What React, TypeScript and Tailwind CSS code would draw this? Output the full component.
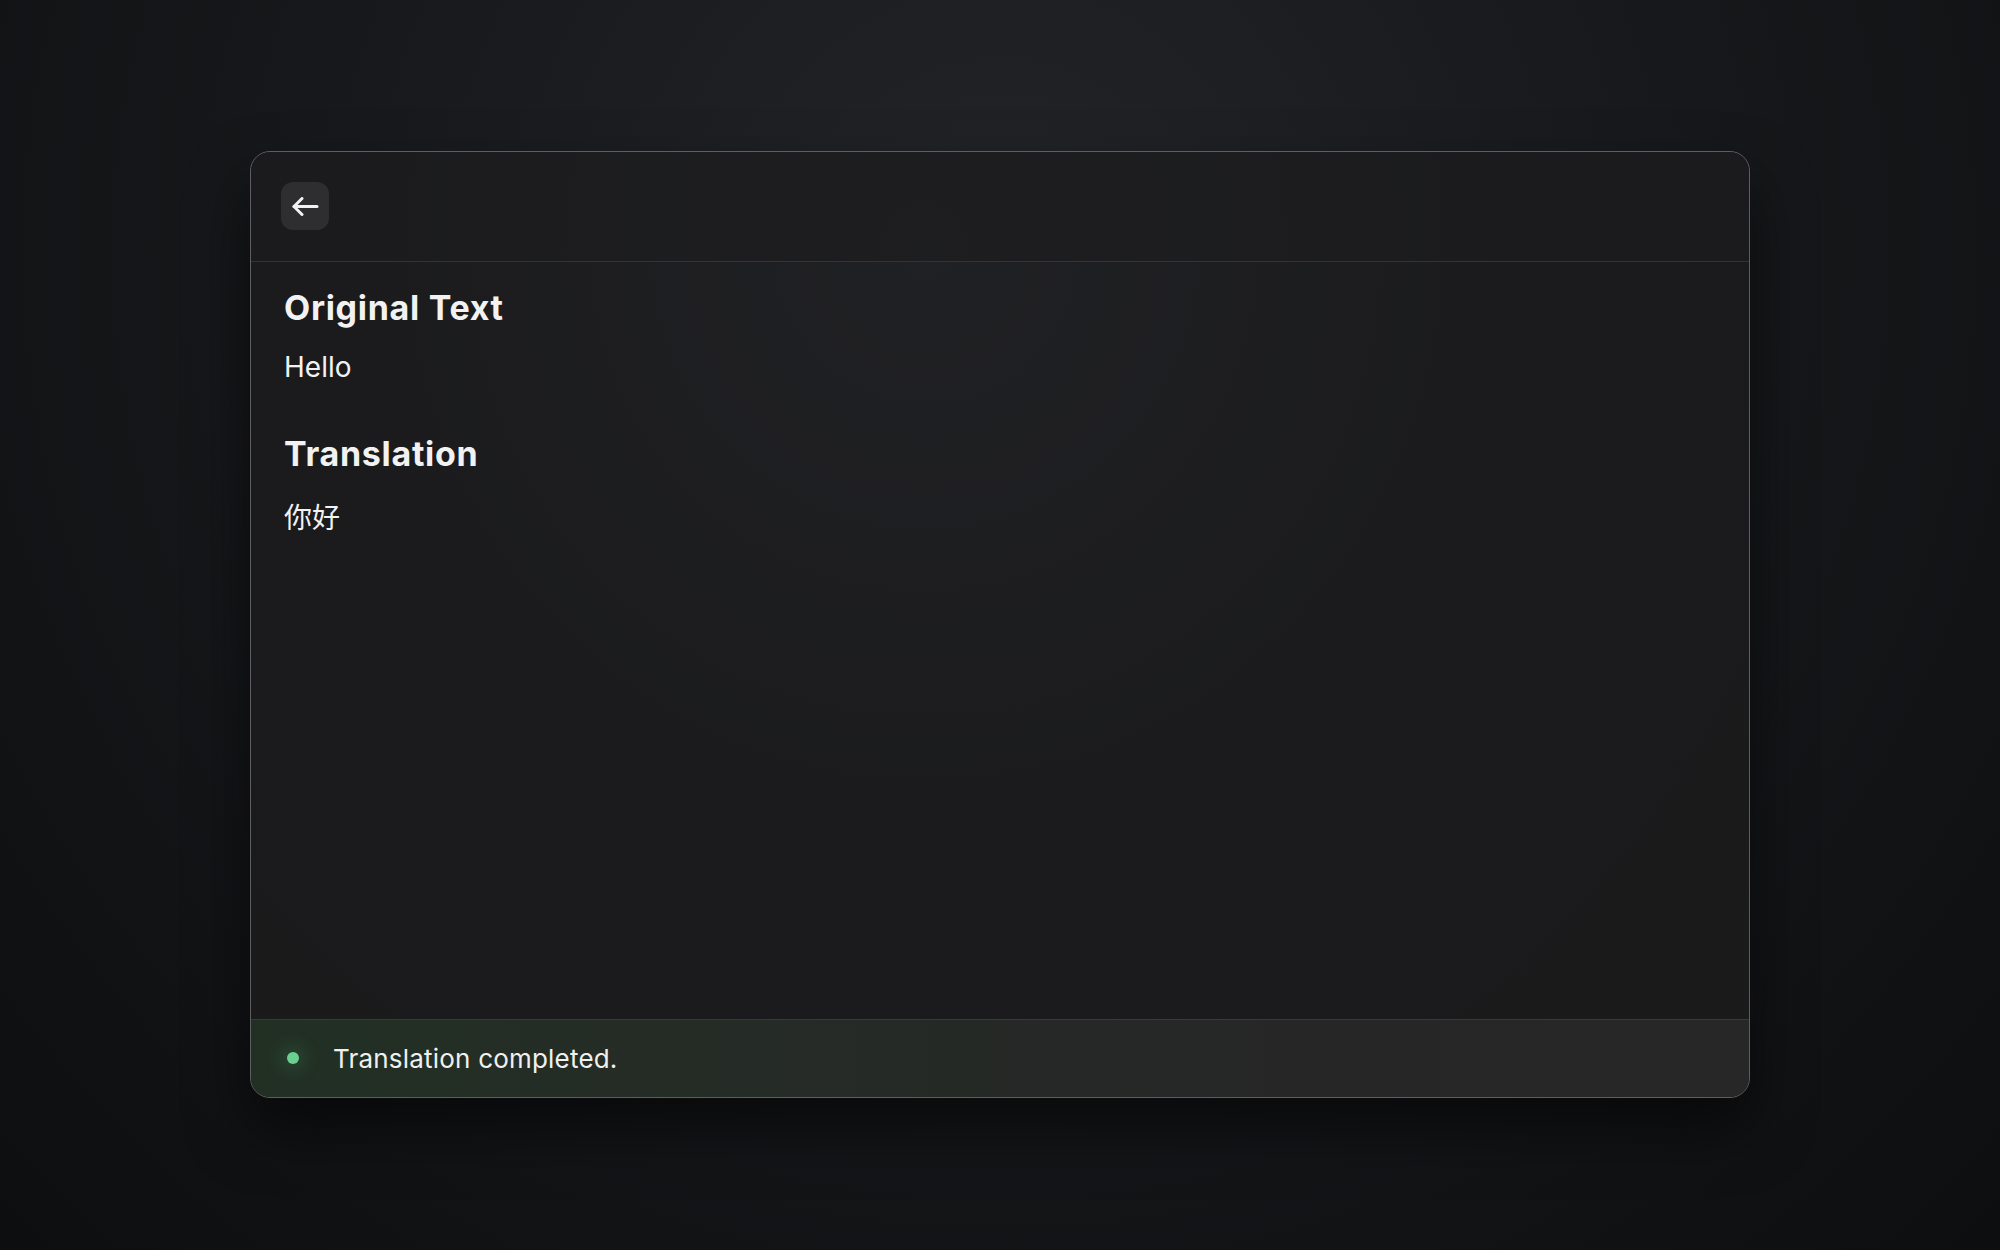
export default function App() {
  return (
    <div
      className="w-full h-screen flex items-center justify-center bg-[radial-gradient(ellipse_at_50%_20%,#232428_0%,#18191c_45%,#0d0e0f_100%)]"
      style={{ fontFamily: 'Inter, "Noto Sans CJK SC", sans-serif' }}
    >
      <div className="w-[1500px] h-[947px] -mt-[2px] flex flex-col rounded-[20px] border border-[#5e5e60] overflow-hidden bg-[radial-gradient(ellipse_at_45%_10%,#202124_0%,#1b1b1d_50%,#1a1a1b_100%)] shadow-[0_30px_60px_rgba(0,0,0,0.55)]">
        <header className="h-[110px] shrink-0 px-[30px] flex items-center border-b border-[#333335] bg-[#1c1c1e]/60">
          <button className="w-12 h-12 rounded-xl bg-[#2e2e30] flex items-center justify-center text-[#f2f2f2]">
            <svg width="27" height="19" viewBox="0 0 27 19" fill="none" stroke="currentColor" strokeWidth="3" strokeLinecap="round" strokeLinejoin="round">
              <path d="M2 9.5h23" />
              <path d="M10 1.5 2 9.5l8 8" />
            </svg>
          </button>
        </header>

        <main className="flex-1 px-[33px] pt-[26px] text-[#f2f2f2]">
          <h2 className="text-[34px] leading-[40px] font-bold tracking-[0.7px]">Original Text</h2>
          <p className="mt-[22px] text-[28px] leading-[34px]">Hello</p>
          <h2 className="mt-[50px] text-[34px] leading-[40px] font-bold tracking-[0.7px]">Translation</h2>
          <p className="mt-[27px] text-[28px] leading-[34px]">你好</p>
        </main>

        <footer className="h-[78px] shrink-0 px-[36px] flex items-center gap-[34px] border-t border-[#3a3a3c] bg-[linear-gradient(90deg,#223024_0%,#252b26_35%,#262627_70%,#272727_100%)]">
          <span className="w-3 h-3 rounded-full bg-[#6bd08f] shadow-[0_0_18px_6px_rgba(80,200,120,0.18)]" />
          <span className="text-[26px] tracking-[0.2px] text-[#f0f0f0]">Translation completed.</span>
        </footer>
      </div>
    </div>
  );
}
